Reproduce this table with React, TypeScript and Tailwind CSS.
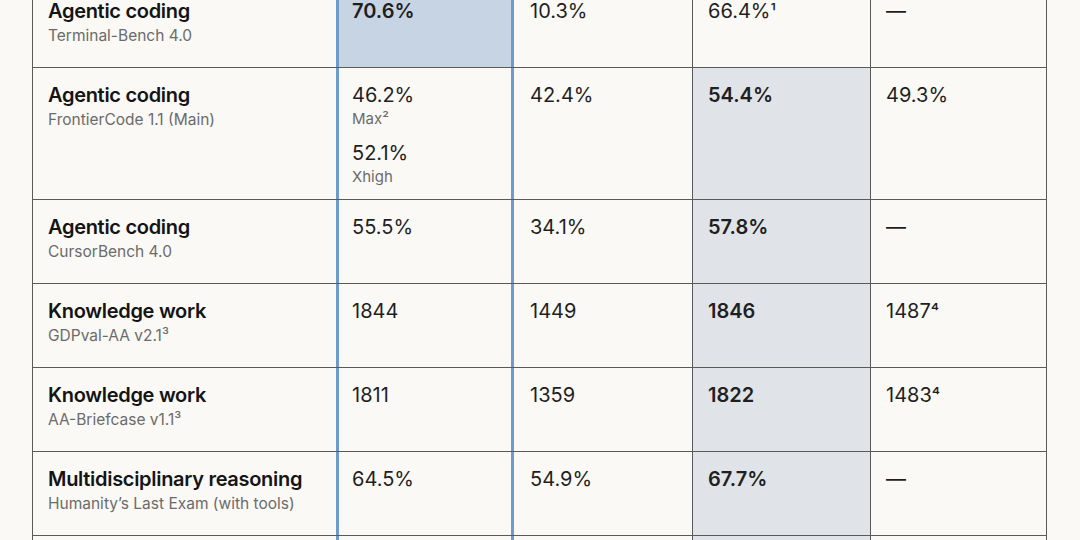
type Val = { v: string; sup?: string; note?: string; noteSup?: string };

type Row = {
  label: string;
  bench: string;
  benchSup?: string;
  cells: Val[][];
  best: number;
  height: string;
};

const rows: Row[] = [
  {
    label: "Agentic coding",
    bench: "Terminal-Bench 4.0",
    cells: [[{ v: "70.6%" }], [{ v: "10.3%" }], [{ v: "66.4%", sup: "¹" }], [{ v: "—" }]],
    best: 0,
    height: "h-[84px]",
  },
  {
    label: "Agentic coding",
    bench: "FrontierCode 1.1 (Main)",
    cells: [
      [
        { v: "46.2%", note: "Max", noteSup: "²" },
        { v: "52.1%", note: "Xhigh" },
      ],
      [{ v: "42.4%" }],
      [{ v: "54.4%" }],
      [{ v: "49.3%" }],
    ],
    best: 2,
    height: "h-[132px]",
  },
  {
    label: "Agentic coding",
    bench: "CursorBench 4.0",
    cells: [[{ v: "55.5%" }], [{ v: "34.1%" }], [{ v: "57.8%" }], [{ v: "—" }]],
    best: 2,
    height: "h-[84px]",
  },
  {
    label: "Knowledge work",
    bench: "GDPval-AA v2.1",
    benchSup: "³",
    cells: [[{ v: "1844" }], [{ v: "1449" }], [{ v: "1846" }], [{ v: "1487", sup: "⁴" }]],
    best: 2,
    height: "h-[84px]",
  },
  {
    label: "Knowledge work",
    bench: "AA-Briefcase v1.1",
    benchSup: "³",
    cells: [[{ v: "1811" }], [{ v: "1359" }], [{ v: "1822" }], [{ v: "1483", sup: "⁴" }]],
    best: 2,
    height: "h-[84px]",
  },
  {
    label: "Multidisciplinary reasoning",
    bench: "Humanity’s Last Exam (with tools)",
    cells: [[{ v: "64.5%" }], [{ v: "54.9%" }], [{ v: "67.7%" }], [{ v: "—" }]],
    best: 2,
    height: "h-[84px]",
  },
  {
    label: "",
    bench: "",
    cells: [[], [], [], []],
    best: 2,
    height: "h-[84px]",
  },
];

function Values({ items, bold }: { items: Val[]; bold: boolean }) {
  return (
    <div className="flex flex-col gap-[10px]">
      {items.map((it, i) => (
        <div key={i} className="flex flex-col">
          <span
            className={`text-[20px] leading-[24px] text-[#1f1f1f] ${bold ? "font-semibold" : "font-normal"}`}
          >
            {it.v}
            {it.sup && <span className="text-[18px] font-normal">{it.sup}</span>}
          </span>
          {it.note && (
            <span className="text-[15px] leading-[24px] text-[#6b6b6b]">
              {it.note}
              {it.noteSup}
            </span>
          )}
        </div>
      ))}
    </div>
  );
}

export default function App() {
  return (
    <div
      className="w-[1080px] h-[540px] overflow-hidden bg-[#faf9f6]"
      style={{ fontFamily: "Inter, 'Noto Sans', sans-serif" }}
    >
      <div className="ml-[32px] mt-[-16px] w-[1015px]">
        {rows.map((r, ri) => (
          <div key={ri} className={`flex border-b border-[#5a5a5a] ${r.height}`}>
            <div className="w-[304px] shrink-0 border-l border-[#5a5a5a] pl-[15px] pt-[15px]">
              <div className="text-[20px] leading-[24px] font-semibold tracking-[-0.3px] text-[#141414]">
                {r.label}
              </div>
              <div className="text-[15.5px] leading-[22px] mt-[2px] text-[#6b6b6b]">
                {r.bench}
                {r.benchSup}
              </div>
            </div>
            <div
              className={`w-[178px] shrink-0 border-x-[3px] border-[#6f9bcb] pl-[13px] pt-[15px] ${
                r.best === 0 ? "bg-[#c7d4e3]" : ""
              }`}
            >
              <Values items={r.cells[0]} bold={r.best === 0} />
            </div>
            <div className="w-[178px] shrink-0 pl-[16px] pt-[15px]">
              <Values items={r.cells[1]} bold={false} />
            </div>
            <div
              className={`w-[179px] shrink-0 border-x border-[#5a5a5a] pl-[15px] pt-[15px] ${
                r.best === 2 ? "bg-[#e0e4e9]" : ""
              }`}
            >
              <Values items={r.cells[2]} bold={r.best === 2} />
            </div>
            <div className="w-[176px] shrink-0 border-r border-[#5a5a5a] pl-[15px] pt-[15px]">
              <Values items={r.cells[3]} bold={false} />
            </div>
          </div>
        ))}
      </div>
    </div>
  );
}
